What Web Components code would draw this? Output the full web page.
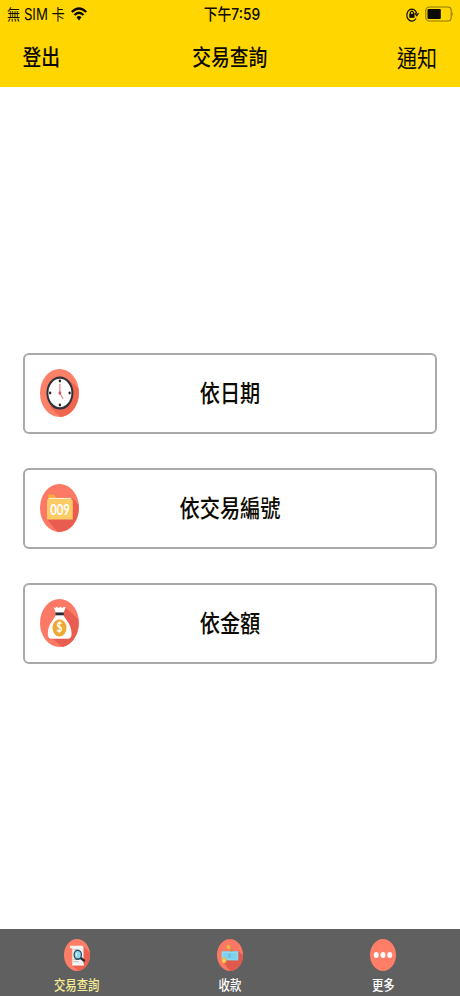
<!DOCTYPE html>
<html lang="zh-Hant">
<head>
<meta charset="utf-8">
<title>交易查詢</title>
<style>
html,body{margin:0;height:100%;overflow:hidden;background:#fff}
body{font-family:Inter,"Noto Sans CJK TC",sans-serif;color:#0c0a00}
</style>
</head>
<body>
<query-app></query-app>
<script>
const define = (name, html) => {
  const t = document.createElement('template');
  t.innerHTML = html;
  customElements.define(name, class extends HTMLElement {
    constructor(){
      super();
      this.attachShadow({mode:'open'}).append(t.content.cloneNode(true));
    }
  });
};

// Text drawn taller than wide
define('tall-text', `<style>
:host{display:block;white-space:nowrap;line-height:1.2;font-size:var(--size,19px);font-weight:var(--weight,500)}
span{display:block;transform:scaleY(var(--stretch,1.17))}
</style><span><slot></slot></span>`);

const icons = {
clock:`<circle cx="50" cy="50" r="50" fill="#fb8068"/><path d="M76 24L98 40A50 50 0 0 1 53 100L26 79Z" fill="#f0654d"/><circle cx="51" cy="50" r="34.5" fill="#303038"/><circle cx="51" cy="50" r="29.5" fill="#fff"/><g fill="#222"><circle cx="51" cy="25" r="3"/><circle cx="51" cy="75" r="3"/><circle cx="26" cy="50" r="3"/><circle cx="76" cy="50" r="3"/></g><path d="M51 31V50L59 62" fill="none" stroke="#d94b5b" stroke-width="2"/><circle cx="51" cy="50" r="3.5" fill="#d94b5b"/>`,
folder:`<circle cx="50" cy="50" r="50" fill="#fb7965"/><path d="M84 30L99 43A50 50 0 0 1 44 99L18 74Z" fill="#e95c50"/><path d="M21 22H36L41 27V34H21Z" fill="#f2ac3e"/><path d="M22 29H79V38H22Z" fill="#fff0c8"/><path d="M21 31H79L84 34V74H18V34Z" fill="#fdcb66"/><text x="51" y="65" text-anchor="middle" textLength="50" lengthAdjust="spacingAndGlyphs" font-family="Lato,sans-serif" font-weight="700" font-size="31" fill="#fff">009</text>`,
bag:`<circle cx="50" cy="50" r="50" fill="#fb7965"/><path d="M64 17L98 42A50 50 0 0 1 57 100L26 78Z" fill="#e95c50"/><path d="M35 17L39 19L43 16L48 19L52 16L57 19L61 16L66 17L60 29H41Z" fill="#fff"/><path d="M41 33H60C64 43 81 51 81 73Q81 83 71 83H30Q20 83 20 73C20 51 37 43 41 33Z" fill="#fff"/><path d="M40 28H61V34H40Z" fill="#28283b"/><circle cx="50" cy="60" r="18" fill="#eea935"/><text x="50" y="69" text-anchor="middle" font-family="Lato,sans-serif" font-weight="700" font-size="26" fill="#fff">$</text>`,
search:`<circle cx="50" cy="50" r="50" fill="#ff7e67"/><path d="M74 22L99 43A50 50 0 0 1 57 99L28 81Z" fill="#ec6050"/><path d="M23 21H70Q75 21 75 28V78H32V29H23Z" fill="#f2f2ef"/><path d="M32 78H77V83H30Z" fill="#fff"/><path d="M36 33H50M36 64H48M36 71H57" stroke="#b6b9bb" stroke-width="3"/><path d="M62 58L80 69" stroke="#292a35" stroke-width="8"/><circle cx="53" cy="49" r="14" fill="#91d9ee" stroke="#294c63" stroke-width="5"/><path d="M48 44V54" stroke="#d9f7ff" stroke-width="4"/>`,
money:`<circle cx="50" cy="50" r="50" fill="#fb7864"/><path d="M82 38L100 50A50 50 0 0 1 50 100L22 70Z" fill="#df5a4d"/><path d="M18 38H82V67H18Z" fill="#80d2ec"/><path d="M22 42H78V63H22Z" fill="none" stroke="#9be1f2" stroke-width="2"/><circle cx="48" cy="52" r="7" fill="#72bfde"/><path d="M47 24L55 38" stroke="#e7a13b" stroke-width="5"/><circle cx="44" cy="25" r="7" fill="#efb33f"/><circle cx="56" cy="34" r="5" fill="#c98542"/><circle cx="27" cy="67" r="9" fill="#f1b83e"/><circle cx="27" cy="67" r="4" fill="#ffdc70"/>`,
more:`<circle cx="50" cy="50" r="50" fill="#ff7e67"/><g fill="#fff"><circle cx="24" cy="50" r="9.5"/><circle cx="50" cy="50" r="9.5"/><circle cx="76" cy="50" r="9.5"/></g>`
};
customElements.define('round-icon', class extends HTMLElement {
  connectedCallback(){
    if(this.shadowRoot) return;
    this.attachShadow({mode:'open'}).innerHTML = `<style>:host{display:block;width:39px;height:48px}svg{display:block;width:100%;height:100%}</style><svg viewBox="0 0 100 100" preserveAspectRatio="none">${icons[this.getAttribute('name')]}</svg>`;
  }
});

define('status-bar', `<style>
:host{display:grid;grid-template-columns:1fr auto 1fr;align-items:center;height:29px;padding:0 6px 0 7px;box-sizing:border-box;--size:13.200px;--weight:400;--stretch:1.15}
.l,.r{display:flex;align-items:center}.l{gap:6px}.r{justify-content:flex-end;gap:6px;padding-bottom:1px}
.l svg{margin-bottom:1px}
.mid{--weight:500;--size:13.8px;padding-left:3px}svg{display:block}
</style>
<div class="l"><tall-text>無 SIM 卡</tall-text>
<svg width="16" height="14" viewBox="0 0 16 14" fill="none" stroke="#0c0a00" stroke-width="2.3"><path d="M.8 5Q8-2 15.200 5M3.500 8Q8 3.600 12.500 8"/><path d="M5.500 10.200Q8 8 10.500 10.200L8 13.500Z" fill="#0c0a00" stroke="none"/></svg></div>
<tall-text class="mid">下午7:59</tall-text>
<div class="r"><svg width="13" height="15" viewBox="0 0 13 15" fill="none" stroke="#0c0a00" stroke-width="1.200"><path d="M10 11.500A5 6 0 1 1 10.700 6.500M8.900 6.200L10.800 8.600L12.500 6"/><path d="M4.300 7V5.500Q5.900 2.800 7.500 5.500V7"/><path d="M3.300 6.800H8.500V10.800H3.300Z" fill="#0c0a00" stroke="none"/></svg>
<svg width="29" height="16" viewBox="0 0 29 16"><rect x=".8" y="1" width="25.400" height="14" rx="3.500" fill="none" stroke="#8d780c" stroke-width="1.100"/><rect x="2.500" y="3" width="13.300" height="10" rx="1" fill="#0c0a00"/><path d="M27.400 5.700Q29 8 27.400 10.300Z" fill="#8d780c"/></svg></div>`);

define('nav-bar', `<style>
:host{display:grid;grid-template-columns:1fr auto 1fr;align-items:center;height:58px;padding:1px 23px 0 22.500px;box-sizing:border-box;--size:18.8px}
::slotted([slot=end]){justify-self:end;--weight:400;--size:20px}
</style><slot name="start"></slot><slot></slot><slot name="end"></slot>`);

define('query-card', `<style>
:host{display:grid;grid-template-columns:39px 1fr 39px;align-items:center;box-sizing:border-box;height:81px;border:2px solid #a9a9a9;border-radius:6px;padding:0 15px;background:#fff;--size:20.200px}
.t{justify-self:center;padding-top:2px}
::slotted(round-icon){margin-bottom:1px}
</style><slot name="icon"></slot><tall-text class="t"><slot></slot></tall-text>`);

define('tab-item', `<style>
:host{display:flex;flex-direction:column;align-items:center;flex:1;padding-top:10px;gap:9px;color:#fff;--size:11.400px;--weight:500;--stretch:1.15}
:host([active]){color:#f8ee96}
::slotted(round-icon){width:26px;height:32px}
</style><slot name="icon"></slot><tall-text><slot></slot></tall-text>`);

define('tab-bar', `<style>:host{display:flex;height:67px;background:#606060}</style><slot></slot>`);

define('query-app', `<style>
:host{display:flex;flex-direction:column;height:996px}
header{background:#ffd600;height:87px}
main{flex:1;display:flex;flex-direction:column;gap:34px;padding:266px 23px 0}
</style>
<header><status-bar></status-bar><nav-bar><tall-text slot="start">登出</tall-text><tall-text>交易查詢</tall-text><tall-text slot="end">通知</tall-text></nav-bar></header>
<main>
<query-card><round-icon slot="icon" name="clock"></round-icon>依日期</query-card>
<query-card><round-icon slot="icon" name="folder"></round-icon>依交易編號</query-card>
<query-card><round-icon slot="icon" name="bag"></round-icon>依金額</query-card>
</main>
<tab-bar>
<tab-item active><round-icon slot="icon" name="search"></round-icon>交易查詢</tab-item>
<tab-item><round-icon slot="icon" name="money"></round-icon>收款</tab-item>
<tab-item><round-icon slot="icon" name="more"></round-icon>更多</tab-item>
</tab-bar>`);
</script>
</body>
</html>
